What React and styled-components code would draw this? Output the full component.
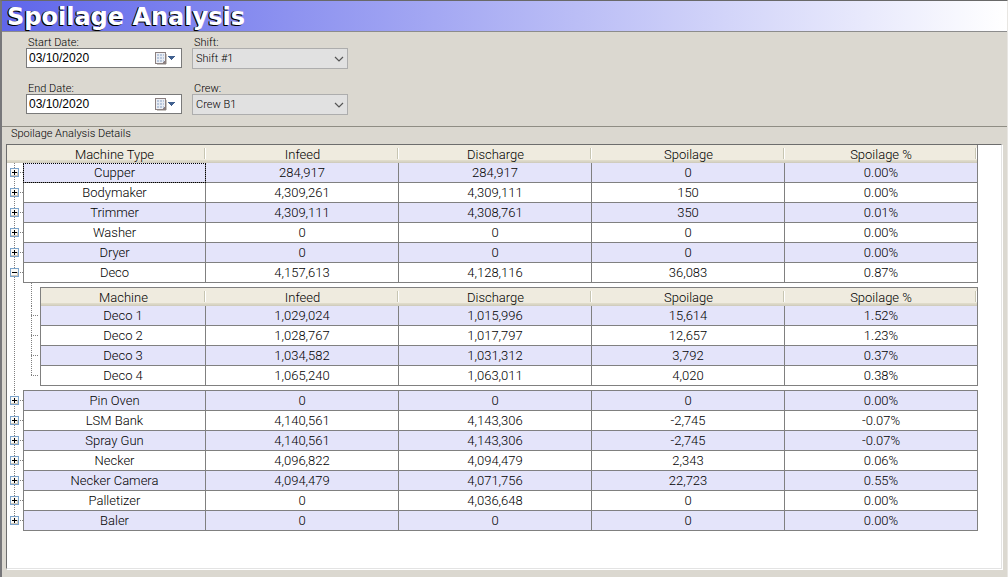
import React from "react";
import styled, { createGlobalStyle } from "styled-components";

const Global = createGlobalStyle`
  * { box-sizing: border-box; }
  html, body, #root { height: 100%; }
  body { margin: 0; background: #dbd8d0; color: #000; font: 300 11px/14px Roboto, Arial, sans-serif; }
`;

const Page = styled.div`
  min-height: 100%;
  display: flex;
  flex-direction: column;
  border-left: 2px solid #77777a;
  border-top: 1px solid #696969;
  border-right: 1px solid #e8e6e2;
`;

const TitleBar = styled.header`
  flex: none;
  height: 31px;
  padding-left: 5px;
  border-bottom: 1px solid #8c8c8c;
  background: linear-gradient(to right, #5f66ea, #fff);
`;

const Title = styled.h1`
  margin: 0;
  font: bold 24px/32px "DejaVu Sans", Verdana, sans-serif;
  color: #fff;
  text-shadow: -1px 0 #000, -1px 1px #000;
`;

const Filters = styled.form`
  flex: none;
  display: grid;
  grid-template-columns: 156px 156px;
  gap: 10px;
  padding: 4px 24px 8px;
  border-bottom: 1px solid #8f8d84;
`;

const Field = styled.div`
  display: flex;
  flex-direction: column;
  height: 36px;
`;

const FieldLabel = styled.label`
  height: 12px;
  padding-left: 2px;
  font: 300 11px/14px Roboto, Arial, sans-serif;
`;

const DateBox = styled.div`
  display: flex;
  align-items: center;
  height: 20px;
  padding-right: 4px;
  background: #fff;
  border: 1px solid #7a7a7a;
`;

const DateInput = styled.input`
  flex: 1;
  min-width: 0;
  padding: 0 2px;
  border: 0;
  outline: 0;
  background: none;
  font: 12px/18px "Liberation Sans", Arial, sans-serif;
`;

const DropButton = styled.button`
  display: flex;
  padding: 0;
  border: 0;
  background: none;
`;

const SelectBox = styled.div`
  display: grid;
  align-items: center;
  height: 21px;
  background: #e1e1e1;
  border: 1px solid #adadad;
  & > * { grid-area: 1 / 1; }
  & > svg { justify-self: end; margin-right: 3px; pointer-events: none; }
`;

const Select = styled.select`
  appearance: none;
  width: 100%;
  height: 19px;
  padding: 1px 20px 0 3px;
  border: 0;
  background: none;
  color: #000;
  font: 300 11px/18px Roboto, Arial, sans-serif;
`;

const Details = styled.section`
  flex: 1;
  display: flex;
  flex-direction: column;
  padding: 0 5px 8px 4px;
`;

const DetailsTitle = styled.h2`
  margin: 0;
  padding-left: 5px;
  font: 300 11px/14px Roboto, Arial, sans-serif;
  height: 17px;
`;

const GridPanel = styled.div`
  flex: 1;
  padding-right: 23px;
  background: #fff;
  border: 1px solid #6d6d6d;
  border-right-color: #e3e3e3;
  border-bottom-color: #e3e3e3;
  box-shadow: 1px 1px #fff;
`;

const Table = styled.table`
  width: 100%;
  table-layout: fixed;
  border-collapse: separate;
  border-spacing: 0;
  font: 300 13px/16px Roboto, Arial, sans-serif;
`;

const Col = styled.col`
  width: ${(p) => p.$w}px;
`;

const headFill =
  "linear-gradient(#efebdf calc(100% - 3px), #e2decd calc(100% - 3px), #d6d2c2 calc(100% - 1px), #cbc7b8)";

const HeadCell = styled.th`
  height: ${(p) => (p.$nested ? 19 : 18)}px;
  padding: 1px 0 0;
  font-weight: 300;
  line-height: 15px;
  background:
    linear-gradient(#c7c5b2, #c7c5b2) right 1px top 3px / 1px 11px no-repeat,
    linear-gradient(#fff, #fff) right 0 top 3px / 1px 11px no-repeat,
    ${headFill};
  border-top: ${(p) => (p.$nested ? "1px solid #808080" : 0)};
  border-left: ${(p) => (p.$nested && p.$first ? "1px solid #808080" : 0)};
  &:last-child { border-right: 1px solid #808080; }
`;

const HeadCorner = styled.td`
  padding: 0;
  background: ${headFill};
`;

const Cell = styled.td`
  height: ${(p) => (p.$top ? 21 : 20)}px;
  padding: 0;
  text-align: center;
  line-height: 19px;
  background: ${(p) => (p.$shade ? "#e4e4fa" : "#fff")};
  border: solid #808080;
  border-width: ${(p) => (p.$top ? 1 : 0)}px 1px 1px ${(p) => (p.$first ? 1 : 0)}px;
  outline: ${(p) => (p.$focus ? "1px dotted #000" : "none")};
  outline-offset: -1px;
`;

const dotsDown = "repeating-linear-gradient(#808080 0 1px, transparent 1px 2px)";
const dotsAcross = "repeating-linear-gradient(to right, #808080 0 1px, transparent 1px 2px)";

const TreeCell = styled.td`
  padding: ${(p) => (p.$top ? 1 : 0)}px 0 1px 3px;
  vertical-align: middle;
  background:
    ${dotsAcross} 13px ${(p) => (p.$top ? 10 : 9)}px / 3px 1px no-repeat,
    ${dotsDown} 7px 0 / 1px ${(p) => (p.$last ? "50%" : "100%")} no-repeat;
`;

const ToggleButton = styled.button`
  display: block;
  width: 9px;
  height: 9px;
  padding: 0;
  border: 0;
  background: none;
  & > svg { display: block; }
`;

const BranchCell = styled.td`
  padding: 0;
  background:
    ${dotsAcross} 8px 9px / 8px 1px no-repeat,
    ${dotsDown} 8px 0 / 1px ${(p) => (p.$last ? "50%" : "100%")} no-repeat;
`;

const BranchHead = styled.td`
  padding: 0;
  background: ${dotsDown} 8px 0 / 1px 100% no-repeat;
`;

const TreeLine = styled.td`
  padding: 0;
  background: ${dotsDown} 7px 0 / 1px 100% no-repeat;
`;

const NestedHolder = styled.td`
  padding: 4px 0;
  background: ${dotsDown} 8px 0 / 1px 4px no-repeat;
`;

const rows = [
  ["Cupper", "284,917", "284,917", "0", "0.00%"],
  ["Bodymaker", "4,309,261", "4,309,111", "150", "0.00%"],
  ["Trimmer", "4,309,111", "4,308,761", "350", "0.01%"],
  ["Washer", "0", "0", "0", "0.00%"],
  ["Dryer", "0", "0", "0", "0.00%"],
  ["Deco", "4,157,613", "4,128,116", "36,083", "0.87%"],
  ["Pin Oven", "0", "0", "0", "0.00%"],
  ["LSM Bank", "4,140,561", "4,143,306", "-2,745", "-0.07%"],
  ["Spray Gun", "4,140,561", "4,143,306", "-2,745", "-0.07%"],
  ["Necker", "4,096,822", "4,094,479", "2,343", "0.06%"],
  ["Necker Camera", "4,094,479", "4,071,756", "22,723", "0.55%"],
  ["Palletizer", "0", "4,036,648", "0", "0.00%"],
  ["Baler", "0", "0", "0", "0.00%"],
];

const decoRows = [
  ["Deco 1", "1,029,024", "1,015,996", "15,614", "1.52%"],
  ["Deco 2", "1,028,767", "1,017,797", "12,657", "1.23%"],
  ["Deco 3", "1,034,582", "1,031,312", "3,792", "0.37%"],
  ["Deco 4", "1,065,240", "1,063,011", "4,020", "0.38%"],
];

const measures = ["Infeed", "Discharge", "Spoilage", "Spoilage %"];

function Toggle({ open, name }) {
  return (
    <ToggleButton type="button" aria-expanded={open} aria-label={name}>
      <svg width="9" height="9" viewBox="0 0 9 9" shapeRendering="crispEdges">
        <rect x="0.5" y="0.5" width="8" height="8" fill="#fbfaf7" stroke="#7ba3cb" />
        <path d="M1 7.5h7M7.5 4v4" stroke="#d0c8bb" />
        <path d={open ? "M2 4.5h5" : "M2 4.5h5M4.5 2v5"} stroke="#000" />
      </svg>
    </ToggleButton>
  );
}

function DateField({ id, label, value }) {
  return (
    <Field>
      <FieldLabel htmlFor={id}>{label}</FieldLabel>
      <DateBox>
        <DateInput id={id} defaultValue={value} />
        <DropButton type="button" aria-label={"Pick " + label}>
          <svg width="22" height="13" viewBox="0 0 22 13" shapeRendering="crispEdges">
            <path d="M2 12.5h9M11.5 2v10" stroke="#c9c6c2" />
            <path d="M0.5 0.5h10v11h-10z" fill="#eef0f5" stroke="#8b8080" />
            <path d="M2 2h7v8h-7z" fill="#b9c7dc" />
            <path d="M2 4.5h7M2 7.5h7M4.5 2v8M7.5 2v8" stroke="#e6ebf3" />
            <path d="M8 11v-1h1v-1h1v2z" fill="#8b8080" />
            <path d="M13 4h7v1h-1v1h-1v1h-1v1h-1v-1h-1v-1h-1v-1h-1z" fill="#41608f" />
          </svg>
        </DropButton>
      </DateBox>
    </Field>
  );
}

function SelectField({ id, label, value }) {
  return (
    <Field>
      <FieldLabel htmlFor={id}>{label}</FieldLabel>
      <SelectBox>
        <Select id={id} defaultValue={value}>
          <option>{value}</option>
        </Select>
        <svg width="10" height="6" viewBox="0 0 10 6">
          <path d="M1 1l4 4 4-4" fill="none" stroke="#555" strokeWidth="1.2" />
        </svg>
      </SelectBox>
    </Field>
  );
}

function DecoTable() {
  return (
    <Table>
      <colgroup>
        <Col $w={17} />
        <Col $w={166} />
        <col /><col /><col /><col />
      </colgroup>
      <thead>
        <tr>
          <BranchHead />
          {["Machine", ...measures].map((h, i) => (
            <HeadCell key={h} $nested $first={i === 0}>{h}</HeadCell>
          ))}
        </tr>
      </thead>
      <tbody>
        {decoRows.map((r, n) => (
          <tr key={r[0]}>
            <BranchCell $last={n === decoRows.length - 1} />
            {r.map((v, i) => (
              <Cell key={i} $first={i === 0} $shade={n % 2 === 0}>{v}</Cell>
            ))}
          </tr>
        ))}
      </tbody>
    </Table>
  );
}

export default function App() {
  return (
    <>
      <Global />
      <Page>
        <TitleBar><Title>Spoilage Analysis</Title></TitleBar>
        <Filters>
          <DateField id="start" label="Start Date:" value="03/10/2020" />
          <SelectField id="shift" label="Shift:" value="Shift #1" />
          <DateField id="end" label="End Date:" value="03/10/2020" />
          <SelectField id="crew" label="Crew:" value="Crew B1" />
        </Filters>
        <Details>
          <DetailsTitle>Spoilage Analysis Details</DetailsTitle>
          <GridPanel>
            <Table>
              <colgroup>
                <Col $w={16} />
                <Col $w={183} />
                <col /><col /><col /><col />
              </colgroup>
              <thead>
                <tr>
                  <HeadCorner />
                  {["Machine Type", ...measures].map((h) => <HeadCell key={h}>{h}</HeadCell>)}
                </tr>
              </thead>
              <tbody>
                {rows.map((r, n) => {
                  const open = r[0] === "Deco";
                  const top = r[0] === "Pin Oven";
                  return (
                    <React.Fragment key={r[0]}>
                      <tr>
                        <TreeCell $top={top} $last={n === rows.length - 1}>
                          <Toggle open={open} name={r[0]} />
                        </TreeCell>
                        {r.map((v, i) => (
                          <Cell key={i} $first={i === 0} $top={top} $shade={n % 2 === 0} $focus={n === 0 && i === 0}>{v}</Cell>
                        ))}
                      </tr>
                      {open && (
                        <tr>
                          <TreeLine />
                          <NestedHolder colSpan={5}><DecoTable /></NestedHolder>
                        </tr>
                      )}
                    </React.Fragment>
                  );
                })}
              </tbody>
            </Table>
          </GridPanel>
        </Details>
      </Page>
    </>
  );
}
